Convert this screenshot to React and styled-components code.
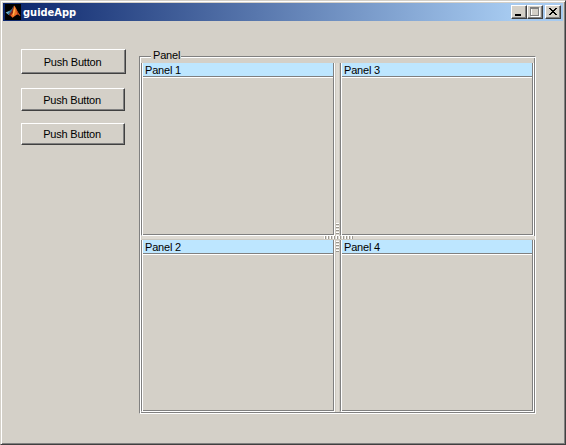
import React from "react";
import styled, { createGlobalStyle } from "styled-components";

const Global = createGlobalStyle`
  * { box-sizing: border-box; }
  body { margin: 0; background: #d4d0c8; overflow: hidden; }
`;

const Window = styled.main`
  width: 566px;
  height: 445px;
  background: #d4d0c8;
  border: 1px solid;
  border-color: #d4d0c8 #404040 #404040 #d4d0c8;
  box-shadow: inset 1px 1px #fff, inset -1px -1px #808080;
  padding: 2px;
  font: 11px/13px "Liberation Sans", Arial, sans-serif;
  letter-spacing: -0.2px;
  color: #000;
`;

const TitleBar = styled.header`
  height: 18px;
  display: flex;
  align-items: center;
  padding: 0 2px;
  background: linear-gradient(90deg, #0a246a, #a6caf0 508px);
`;

const Title = styled.h1`
  margin: 0 auto 0 2px;
  padding-top: 2px;
  color: #fff;
  font: bold 11px/16px "DejaVu Sans", Verdana, sans-serif;
  font-stretch: condensed;
  letter-spacing: 0;
`;

const CaptionButton = styled.button`
  width: 16px;
  height: 14px;
  padding: 0;
  margin-left: ${(p) => p.$gap || 0}px;
  border: 1px solid;
  border-color: #fff #404040 #404040 #fff;
  box-shadow: inset -1px -1px #808080;
  background: #d4d0c8;
  display: flex;
  svg { display: block; }
`;

const Body = styled.div`
  display: flex;
  align-items: flex-start;
  padding: 28px 0 0 18px;
`;

const ButtonColumn = styled.div`
  width: 118px;
  flex: none;
  display: flex;
  flex-direction: column;
`;

const PushButton = styled.button`
  width: ${(p) => p.$width}px;
  height: ${(p) => p.$height}px;
  margin: 0 0 ${(p) => p.$after || 0}px;
  padding: 1px 2px 0 0;
  border: 1px solid;
  border-color: #fff #404040 #404040 #fff;
  box-shadow: inset -1px -1px #808080;
  background: #d4d0c8;
  font: inherit;
  letter-spacing: inherit;
  color: inherit;
`;

const Group = styled.section`
  width: 397px;
  height: 365px;
  display: flex;
  flex-direction: column;
`;

const Caption = styled.div`
  height: 9px;
  flex: none;
  display: flex;
  &::before {
    content: "";
    width: 11px;
    margin-top: 7px;
    border-top: 1px solid #808080;
    border-left: 1px solid #808080;
    box-shadow: inset 1px 1px #fff;
  }
  &::after {
    content: "";
    flex: 1;
    margin-top: 7px;
    border-top: 1px solid #808080;
    border-right: 1px solid #fff;
    box-shadow: inset 0 1px #fff;
  }
`;

const CaptionText = styled.span`
  width: 30px;
  padding-left: 2px;
  line-height: 13px;
  white-space: nowrap;
`;

const Frame = styled.div`
  flex: 1;
  border: 1px solid;
  border-color: transparent #fff #fff #808080;
  border-top: 0;
  box-shadow: inset 1px 0 #fff, inset -1px -1px #808080;
  padding: 5px 1px 1px;
  display: grid;
  grid-template: 173px 4px 172px / 194px 5px 194px;
`;

const Pane = styled.section`
  grid-area: ${(p) => p.$area};
  border: 1px solid;
  border-color: transparent #fff #fff #808080;
  border-top: 0;
  box-shadow: inset 1px 0 #fff, inset -1px -1px #808080;
  padding: 0 1px 1px;
  display: flex;
  flex-direction: column;
`;

const PaneTitle = styled.h2`
  height: 15px;
  margin: 0;
  padding: 1px 0 0 2px;
  border-bottom: 1px solid #fff;
  box-shadow: inset 0 -1px #808080;
  background: #bde6ff;
  font: inherit;
`;

const VerticalSplit = styled.div`
  grid-area: 1 / 2 / 4 / 3;
  display: flex;
  align-items: center;
  background: #dedad3;
  border: 0 solid #ccc8bf;
  border-width: 0 1px;
`;

const HorizontalSplit = styled.div`
  grid-area: 2 / 1 / 3 / 4;
  margin: 0 -1px 0 1px;
  display: flex;
  justify-content: center;
  background: #dedad3;
  border-bottom: 1px solid #ccc8bf;
  z-index: 1;
`;

const Grip = styled.span`
  width: ${(p) => (p.$vertical ? 3 : 29)}px;
  height: ${(p) => (p.$vertical ? 29 : 3)}px;
  background: repeating-linear-gradient(
    ${(p) => (p.$vertical ? 180 : 90)}deg,
    #fff 0 1px, #9c9890 1px 2px, #dedad3 2px 3px
  );
`;

const Logo = () => (
  <svg width="16" height="16" viewBox="0 0 16 16" aria-hidden="true">
    <path fill="#000" d="M0 0h16v16H0z" />
    <path fill="#6fb4d2" d="M.6 8.6L4.8 6.8 6.5 8l-2.6 3z" />
    <path fill="#376f93" d="M4.8 6.8L7 4.8 8.7 1.6 8 7l-4 4-1.2-.9z" />
    <path fill="#8c2616" d="M3.9 11L6.4 7.5 9 1.5l1.5 7-3 5z" />
    <path fill="#f06e25" d="M9.2 1.6c1.8 1.8 3 6.4 6.3 10.3l-3.2-1.6-4.8 3.4-1.6-2.2 2-2.6z" />
    <path fill="#ffb44a" d="M9.3 2.5l.8 4.2-1.6 5.4-.8-1.7z" />
    <path fill="#a93719" d="M10.8 4.8c1.2 2.2 2.3 4.9 4.7 7.1l-3-1.5z" />
  </svg>
);

const Minimize = () => (
  <svg width="14" height="12" shapeRendering="crispEdges"><path d="M3 8h6v2H3z" /></svg>
);
const Maximize = () => (
  <svg width="14" height="12" shapeRendering="crispEdges">
    <path fill="none" stroke="#fff" d="M3.5 2.5h8v8h-8z" />
    <path fill="none" stroke="#808080" d="M2.5 1.5h8v8h-8zM2.5 2.5h8" />
  </svg>
);
const Close = () => (
  <svg width="14" height="12" shapeRendering="crispEdges">
    <path d="M3 2h2v1h1v1h2v-1h1v-1h2v1h-1v1h-1v1h-1v1h1v1h1v1h1v1H9v-1H8v-1H6v1H5v1H3v-1h1v-1h1v-1h1v-1H5v-1H4v-1H3z" />
  </svg>
);

export default function App() {
  return (
    <>
      <Global />
      <Window>
        <TitleBar>
          <Logo />
          <Title>guideApp</Title>
          <CaptionButton aria-label="Minimize"><Minimize /></CaptionButton>
          <CaptionButton aria-label="Maximize"><Maximize /></CaptionButton>
          <CaptionButton aria-label="Close" $gap={2}><Close /></CaptionButton>
        </TitleBar>
        <Body>
          <ButtonColumn>
            <PushButton $width={105} $height={25} $after={14}>Push Button</PushButton>
            <PushButton $width={104} $height={23} $after={12}>Push Button</PushButton>
            <PushButton $width={104} $height={22}>Push Button</PushButton>
          </ButtonColumn>
          <Group>
            <Caption><CaptionText>Panel</CaptionText></Caption>
            <Frame>
              <Pane $area="1 / 1"><PaneTitle>Panel 1</PaneTitle></Pane>
              <VerticalSplit><Grip $vertical /></VerticalSplit>
              <Pane $area="1 / 3"><PaneTitle>Panel 3</PaneTitle></Pane>
              <HorizontalSplit><Grip /></HorizontalSplit>
              <Pane $area="3 / 1"><PaneTitle>Panel 2</PaneTitle></Pane>
              <Pane $area="3 / 3"><PaneTitle>Panel 4</PaneTitle></Pane>
            </Frame>
          </Group>
        </Body>
      </Window>
    </>
  );
}
